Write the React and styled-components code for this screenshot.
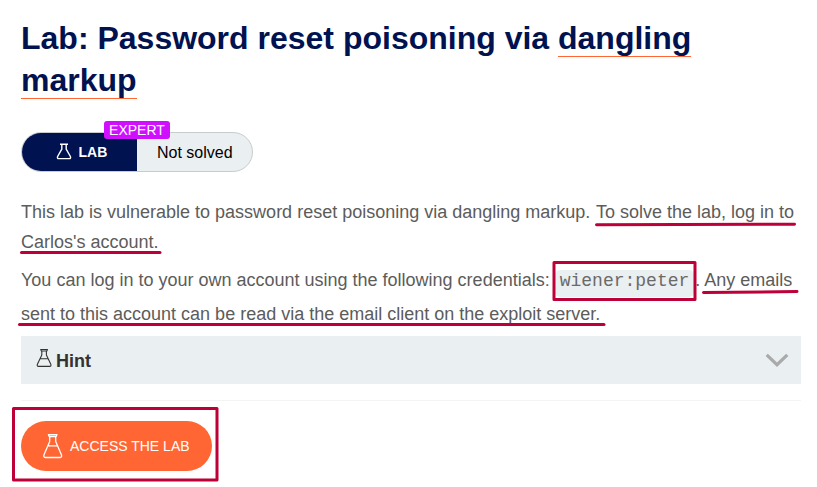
import React from "react";
import styled, { createGlobalStyle } from "styled-components";

const GlobalStyle = createGlobalStyle`
  * { box-sizing: border-box; }
  body { margin: 0; background: #fff; font-family: "Liberation Sans", Arial, sans-serif; }
`;

const Page = styled.main`
  position: relative;
  width: 817px;
  height: 487px;
  padding: 17px 16px 0 21px;
  overflow: hidden;
`;

const Title = styled.h1`
  margin: 0;
  font-size: 32px;
  line-height: 42px;
  font-weight: 700;
  color: #00124f;
`;

const TitleLink = styled.a`
  border-bottom: 1px solid #ff6633;
`;

const StatusPill = styled.div`
  position: relative;
  display: flex;
  width: 232px;
  height: 40px;
  margin-top: 31px;
  border: 1px solid #c8cccd;
  border-radius: 20px;
  background: #eaeff2;
`;

const PillKind = styled.div`
  display: flex;
  align-items: center;
  width: 115px;
  padding: 0 0 1px 34px;
  gap: 6.5px;
  border-radius: 19px 0 0 19px;
  background: #00124f;
  color: #fff;
  font-size: 14px;
  font-weight: 700;
`;

const PillState = styled.div`
  flex: 1;
  padding-left: 20px;
  line-height: 39px;
  font-size: 16px;
  color: #000;
`;

const LevelBadge = styled.span`
  position: absolute;
  left: 82px;
  top: -12px;
  width: 66px;
  height: 18px;
  border-radius: 3px;
  background: #d00fff;
  color: #fff;
  font-size: 14px;
  line-height: 18px;
  text-align: center;
`;

const Paragraph = styled.p`
  margin: ${(p) => p.$top}px 0 0;
  font-size: 18px;
  line-height: ${(p) => p.$leading}px;
  color: #5c5c5b;
  white-space: nowrap;
`;

const Goal = styled.span`
  margin-left: 0.6px;
`;

const Code = styled.code`
  display: inline-block;
  height: 27px;
  margin: 7px 1px 0 0;
  padding: 0 5px;
  border-radius: 5px;
  background: #eaeff2;
  font-family: "Nimbus Mono PS", "Courier 10 Pitch", "Liberation Mono", monospace;
  font-size: 18px;
  line-height: 23px;
  color: #6a6a69;
  vertical-align: top;
`;

const HintBar = styled.section`
  display: flex;
  align-items: center;
  height: 48px;
  margin-top: 5px;
  padding: 0 12px 0 15px;
  width: 780px;
  background: #eaeff2;
  color: #333332;
  font-size: 18px;
  font-weight: 700;
`;

const HintLabel = styled.span`
  flex: 1;
  margin-left: 4px;
  padding-top: 2px;
  line-height: 48px;
`;

const Divider = styled.hr`
  width: 780px;
  height: 1px;
  margin: 16px 0 20px;
  border: 0;
  background: #f4f4f4;
`;

const AccessButton = styled.button`
  display: flex;
  align-items: center;
  gap: 7px;
  width: 191px;
  height: 50px;
  padding: 0 0 0 22px;
  border: 0;
  border-radius: 25px;
  background: #ff6633;
  color: #fff;
  font: 14px "Liberation Sans", Arial, sans-serif;
`;

const MarkerLayer = styled.svg`
  position: absolute;
  inset: 0;
  pointer-events: none;
`;

function PillFlask() {
  return (
    <svg width="16" height="18" viewBox="0 0 16 18" fill="none" stroke="#fff" strokeWidth="1.4" strokeLinejoin="round">
      <path d="M4 1.2H12M5.8 1.4V6.2L1.6 13.5Q.9 15.6 2.8 15.6H13.2Q15.1 15.6 14.4 13.5L10.2 6.2V1.4" />
    </svg>
  );
}

function HintFlask() {
  return (
    <svg width="16" height="24" viewBox="0 0 16 24" fill="none" stroke="#333332" strokeWidth="1.1" strokeLinejoin="round">
      <path d="M4.7 1.5H11.5L10.8 3H5.4ZM5.8 3V7L1.4 16.2Q.7 18.4 2.5 18.4H13.7Q15.5 18.4 14.8 16.2L10.4 7V3M4 10.8H12.2" />
    </svg>
  );
}

function ButtonFlask() {
  return (
    <svg width="20" height="26" viewBox="0 0 20 26" fill="none" stroke="#fff" strokeWidth="1.3" strokeLinejoin="round">
      <path d="M5.4 1.6H14L13.2 3.5H6.2ZM6.7 3.5V8.5L1 21.8Q.2 24.5 2.7 24.5H16.7Q19.2 24.5 18.4 21.8L12.7 8.5V3.5M4.9 12.8H14.5" />
    </svg>
  );
}

function Chevron() {
  return (
    <svg width="24" height="16" viewBox="0 0 24 16" fill="none" stroke="#aaa" strokeWidth="3.2">
      <path d="M1.7 2.8L12 12.7L22.3 2.8" />
    </svg>
  );
}

function Markers() {
  return (
    <MarkerLayer width="817" height="487" fill="none" stroke="#bd0037" strokeWidth="3" strokeLinecap="round">
      <path d="M596.5 224.7L794.5 224.2" />
      <path d="M21.5 252.6L160 252.6" />
      <path d="M703.5 292.6L797 291.6" />
      <path d="M19.5 324.5L604 324.5" />
      <rect x="554" y="262.5" width="141" height="37" strokeLinejoin="round" />
      <rect x="13.5" y="408.5" width="203.5" height="71.5" strokeLinejoin="round" />
    </MarkerLayer>
  );
}

export default function App() {
  return (
    <>
      <GlobalStyle />
      <Page>
        <Title>
          Lab: Password reset poisoning via <TitleLink>dangling markup</TitleLink>
        </Title>
        <StatusPill>
          <PillKind><PillFlask />LAB</PillKind>
          <PillState>Not solved</PillState>
          <LevelBadge>EXPERT</LevelBadge>
        </StatusPill>
        <Paragraph $top={25} $leading={30}>
          This lab is vulnerable to password reset poisoning via dangling markup. <Goal>To solve the lab, log in to</Goal>
          <br />
          Carlos's account.
        </Paragraph>
        <Paragraph $top={6} $leading={34}>
          You can log in to your own account using the following credentials: <Code>wiener:peter</Code>. Any emails
          <br />
          sent to this account can be read via the email client on the exploit server.
        </Paragraph>
        <HintBar>
          <HintFlask />
          <HintLabel>Hint</HintLabel>
          <Chevron />
        </HintBar>
        <Divider />
        <AccessButton><ButtonFlask />ACCESS THE LAB</AccessButton>
        <Markers />
      </Page>
    </>
  );
}
